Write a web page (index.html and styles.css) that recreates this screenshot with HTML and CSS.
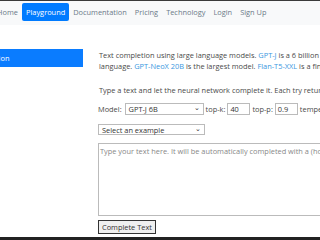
FILE: index.html
```html
<!DOCTYPE html>
<html>
<head>
<meta charset="utf-8">
<link rel="stylesheet" href="styles.css">
</head>
<body>
<div class="topline"></div>
<nav class="navbar">
  <a class="nav-item home">Home</a>
  <a class="nav-item active">Playground</a>
  <a class="nav-item">Documentation</a>
  <a class="nav-item">Pricing</a>
  <a class="nav-item">Technology</a>
  <a class="nav-item">Login</a>
  <a class="nav-item">Sign Up</a>
</nav>
<div class="layout">
  <aside class="sidebar">
    <a class="side-btn">Text Generation</a>
  </aside>
  <main class="main">
    <p class="intro">Text completion using large language models. <a class="link">GPT-J</a> is a 6 billion parameters model trained on a large dataset of English<br>language. <a class="link">GPT-NeoX 20B</a> is the largest model. <a class="link">Flan-T5-XXL</a> is a fine-tuned model that understands instructions.</p>
    <p class="intro2">Type a text and let the neural network complete it. Each try returns a different randomly chosen completion.</p>
    <div class="form-row">
      <label>Model:</label>
      <div class="select model-select"><span>GPT-J 6B</span><span class="caret">&#8964;</span></div>
      <label>top-k:</label>
      <div class="input">40</div>
      <label>top-p:</label>
      <div class="input">0.9</div>
      <label>temperature:</label>
      <div class="input">1.0</div>
    </div>
    <div class="select example-select"><span>Select an example</span><span class="caret">&#8964;</span></div>
    <div class="textarea">Type your text here. It will be automatically completed with a (hopefully) meaningful continuation.</div>
    <div class="btn">Complete Text</div>
  </main>
</div>
<div class="bottomline"></div>
</body>
</html>
```

FILE: styles.css
```css
* { box-sizing: border-box; }
html, body { margin: 0; padding: 0; }
body {
  width: 320px;
  height: 240px;
  overflow: hidden;
  background: #fff;
  font-family: "Open Sans", "Noto Sans", sans-serif;
  font-size: 7.4px;
  color: #4a4a4a;
  display: flex;
  flex-direction: column;
}
.topline { height: 1px; background: #3a3a3a; flex: none; }
.navbar {
  flex: none;
  height: 24px;
  background: #f8f9fa;
  display: flex;
  align-items: flex-start;
  padding-top: 2px;
  margin-left: -9px;
}
.nav-item {
  display: block;
  height: 18px;
  line-height: 18px;
  padding: 0 4px;
  color: #6c7a89;
  white-space: nowrap;
}
.nav-item.home { width: 31px; text-align: right; }
.nav-item.active {
  background: #007bff;
  color: #fff;
  border-radius: 2px;
}
.layout {
  flex: 1;
  display: flex;
  gap: 15px;
  padding-top: 24px;
  min-height: 0;
}
.sidebar {
  flex: none;
  width: 83px;
  overflow: hidden;
}
.side-btn {
  display: block;
  width: 140px;
  margin-left: -54px;
  height: 18px;
  line-height: 18px;
  padding-left: 8px;
  background: #0a7cff;
  color: #fff;
  border-radius: 3px;
  white-space: nowrap;
}
.main {
  flex: none;
  width: 600px;
  margin-left: 1px;
}
.intro, .intro2 {
  margin: 0;
  line-height: 11px;
  white-space: nowrap;
}
.intro { margin-top: 1px; }
.intro2 { margin-top: 13px; }
.link { color: #3a97e0; }
.form-row {
  display: flex;
  align-items: center;
  gap: 2px;
  margin-top: 7px;
  margin-left: -1px;
  height: 12px;
}
.select {
  height: 12px;
  border: 1px solid #bbb;
  display: flex;
  justify-content: space-between;
  align-items: center;
  padding: 0 3px;
  color: #333;
  background: #fff;
}
.caret { font-size: 7px; line-height: 1; margin-top: -3px; }
.model-select { width: 79px; margin-left: 1px; }
.input {
  height: 12px;
  width: 23px;
  border: 1px solid #bbb;
  padding: 0 2px;
  line-height: 10px;
  color: #333;
}
.example-select {
  width: 107px;
  height: 11px;
  margin-top: 9px;
  margin-left: -1px;
}
.textarea {
  margin-top: 8px;
  margin-left: -1px;
  height: 73px;
  width: 500px;
  border: 1px solid #bbb;
  padding: 2px 1px;
  color: #888;
  white-space: nowrap;
}
.btn {
  margin-top: 4px;
  margin-left: -1px;
  display: inline-block;
  height: 14px;
  line-height: 12px;
  border: 1px solid #333;
  background: #efefef;
  padding: 0 3px;
  color: #333;
}
.bottomline { flex: none; height: 3px; background: #222; }
```
